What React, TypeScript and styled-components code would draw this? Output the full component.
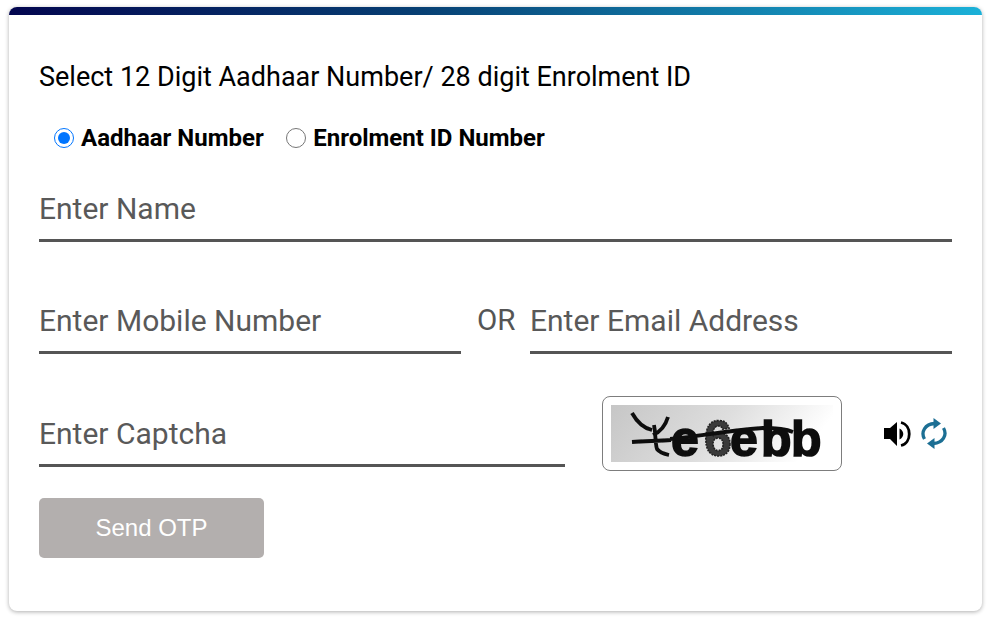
import styled, { createGlobalStyle } from "styled-components";

const GlobalStyle = createGlobalStyle`
  html, body {
    margin: 0;
    padding: 0;
    background: #ffffff;
  }
  body {
    font-family: Roboto, "Liberation Sans", sans-serif;
  }
`;

const Page = styled.div`
  width: 995px;
  height: 621px;
  padding: 7px 13px 10px 9px;
  box-sizing: border-box;
`;

const Card = styled.form`
  height: 604px;
  box-sizing: border-box;
  border-radius: 8px;
  background: #ffffff;
  overflow: hidden;
  box-shadow: 0 1px 4px rgba(0, 0, 0, 0.32);
`;

const TopBar = styled.div`
  height: 8px;
  background: linear-gradient(90deg, #03064f 0%, #073f73 42%, #1bb1d8 100%);
`;

const Body = styled.div`
  padding: 47px 30px 0;
  display: flex;
  flex-direction: column;
`;

const Title = styled.p`
  margin: 0;
  font-size: 27px;
  line-height: 30px;
  color: #000000;
`;

const RadioRow = styled.div`
  display: flex;
  align-items: center;
  margin-top: 31px;
  padding-left: 15px;
  gap: 22.5px;
`;

const RadioLabel = styled.label`
  display: flex;
  align-items: center;
  gap: 7px;
  font-size: 24px;
  line-height: 30px;
  font-weight: 700;
  color: #000000;
`;

const Radio = styled.input`
  width: 20px;
  height: 20px;
  margin: 0;
  accent-color: #0075ff;
`;

const Row = styled.div<{ $top: number }>`
  display: flex;
  align-items: flex-end;
  margin-top: ${({ $top }) => $top}px;
`;

const TextField = styled.input<{ $width: number }>`
  width: ${({ $width }) => $width}px;
  height: 56px;
  box-sizing: border-box;
  padding: 0 0 8px;
  border: 0;
  border-bottom: 3px solid #555555;
  outline: none;
  background: transparent;
  font-family: Roboto, "Liberation Sans", sans-serif;
  font-size: 30px;
  color: #555555;

  &::placeholder {
    color: #595959;
    opacity: 1;
  }
`;

const CaptchaField = styled(TextField)`
  margin-bottom: 4px;
`;

const OrLabel = styled.span`
  width: 69px;
  padding: 0 0 17px 16px;
  box-sizing: border-box;
  font-size: 29.5px;
  line-height: 34px;
  color: #555555;
`;

const CaptchaFrame = styled.div`
  width: 240px;
  height: 75px;
  box-sizing: border-box;
  margin-left: 37px;
  border: 1px solid #7d7d7d;
  border-radius: 8px;
  padding: 8px;
  display: flex;
`;

const CaptchaActions = styled.div`
  display: flex;
  align-items: center;
  gap: 10px;
  margin-left: 42px;
  height: 75px;
`;

const SendButton = styled.button`
  width: 225px;
  height: 60px;
  margin-top: 27px;
  border: 0;
  border-radius: 5px;
  background: #b3afae;
  color: #ffffff;
  font-family: "Liberation Sans", Arial, sans-serif;
  font-size: 24px;
`;

const CaptchaImage = () => (
  <svg width="222" height="57" viewBox="0 0 222 57">
    <defs>
      <linearGradient id="captchaBg" x1="0" x2="1" y1="0" y2="0.2">
        <stop offset="0" stopColor="#c6c6c6" />
        <stop offset="0.55" stopColor="#dedede" />
        <stop offset="1" stopColor="#ffffff" />
      </linearGradient>
      <filter id="soft">
        <feGaussianBlur stdDeviation="0.7" />
      </filter>
    </defs>
    <rect width="222" height="57" fill="url(#captchaBg)" />
    <g filter="url(#soft)">
      <text
        x="60 93 119 150 180"
        y="51"
        fontFamily="Liberation Sans"
        fontWeight="700"
        fontSize="50"
        fill="#0c0c0c"
        stroke="#0c0c0c"
        strokeWidth="1.6"
      >
        e<tspan fill="#3a3a3a" stroke="#222222" strokeDasharray="2 1">6</tspan>ebb
      </text>
      <path
        d="M21 8C26 17 32 23 41 25M57 12C54 22 49 27 42 30M21 37C34 36 48 36 60 35M43 20C45 30 44 38 46 44C49 48 53 49 58 50M59 34C80 33 110 26 152 23C165 23 175 24 182 27"
        fill="none"
        stroke="#0c0c0c"
        strokeWidth="3.8"
      />
    </g>
  </svg>
);

const SpeakerIcon = () => (
  <svg width="27" height="26" viewBox="0 0 27 26">
    <path d="M0 7h6l7-6v24l-7-7H0z" fill="#000" />
    <path d="M15.5 7.5C20.5 10 20.5 16 15.5 18.5z" fill="#000" />
    <path d="M17 1.5C28 4 28 22 17 24.5" fill="none" stroke="#000" strokeWidth="2.8" />
  </svg>
);

const RefreshIcon = () => (
  <svg width="26" height="31" viewBox="0 0 26 31">
    <path d="M3.5 21C-0.5 14 4 6 13.5 5.5" fill="none" stroke="#1c6f94" strokeWidth="3.3" />
    <path d="M12.5 0l7.5 5.5-7.5 5.5z" fill="#1c6f94" />
    <path d="M22.5 10C26.5 17 22 25 12.5 25.5" fill="none" stroke="#1c6f94" strokeWidth="3.3" />
    <path d="M13.5 20L6 25.5l7.5 5.5z" fill="#1c6f94" />
  </svg>
);

export default function App() {
  return (
    <Page>
      <GlobalStyle />
      <Card>
        <TopBar />
        <Body>
          <Title>Select 12 Digit Aadhaar Number/ 28 digit Enrolment ID</Title>
          <RadioRow>
            <RadioLabel>
              <Radio type="radio" name="idType" defaultChecked />
              Aadhaar Number
            </RadioLabel>
            <RadioLabel>
              <Radio type="radio" name="idType" />
              Enrolment ID Number
            </RadioLabel>
          </RadioRow>
          <Row $top={33}>
            <TextField $width={913} placeholder="Enter Name" />
          </Row>
          <Row $top={56}>
            <TextField $width={422} placeholder="Enter Mobile Number" />
            <OrLabel>OR</OrLabel>
            <TextField $width={422} placeholder="Enter Email Address" />
          </Row>
          <Row $top={42}>
            <CaptchaField $width={526} placeholder="Enter Captcha" />
            <CaptchaFrame>
              <CaptchaImage />
            </CaptchaFrame>
            <CaptchaActions>
              <SpeakerIcon />
              <RefreshIcon />
            </CaptchaActions>
          </Row>
          <SendButton type="button">Send OTP</SendButton>
        </Body>
      </Card>
    </Page>
  );
}
